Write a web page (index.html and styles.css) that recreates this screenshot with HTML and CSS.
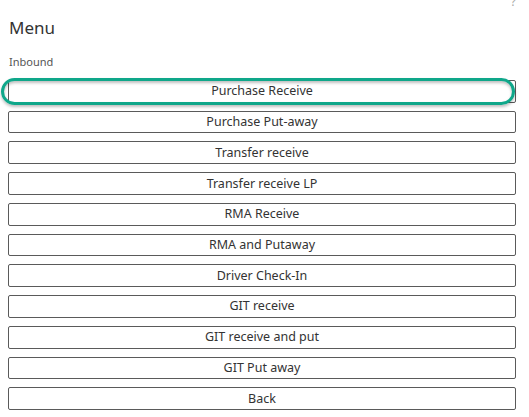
FILE: index.html
```html
<!DOCTYPE html>
<html>
<head>
<meta charset="utf-8">
<link rel="stylesheet" href="styles.css">
</head>
<body>
<div class="page">
  <span class="help">?</span>
  <h1 class="title">Menu</h1>
  <div class="section">Inbound</div>
  <div class="buttons">
    <button class="btn focused">Purchase Receive</button>
    <button class="btn">Purchase Put-away</button>
    <button class="btn">Transfer receive</button>
    <button class="btn">Transfer receive LP</button>
    <button class="btn">RMA Receive</button>
    <button class="btn">RMA and Putaway</button>
    <button class="btn">Driver Check-In</button>
    <button class="btn">GIT receive</button>
    <button class="btn">GIT receive and put</button>
    <button class="btn">GIT Put away</button>
    <button class="btn">Back</button>
  </div>
</div>
</body>
</html>
```
FILE: styles.css
```css
html, body {
  margin: 0;
  padding: 0;
  background: #fff;
}
.page {
  position: relative;
  font-family: "Noto Sans", "Open Sans", sans-serif;
  color: #333;
  padding: 0 13px 0 8px;
}
.help {
  position: absolute;
  top: -7px;
  right: 13px;
  font-size: 12px;
  color: #aaa;
}
.title {
  margin: 0;
  padding-top: 17px;
  padding-left: 1px;
  font-size: 17px;
  font-weight: normal;
  line-height: 22px;
  color: #333;
}
.section {
  margin-top: 16px;
  padding-left: 1px;
  font-size: 11px;
  line-height: 14px;
  color: #555;
}
.buttons {
  margin-top: 11px;
  display: flex;
  flex-direction: column;
  gap: 8.05px;
}
.btn {
  position: relative;
  height: 22.7px;
  margin: 0;
  padding: 0;
  background: #fff;
  border: 1px solid #5a5a5a;
  border-radius: 2px;
  font-family: "Noto Sans", "Open Sans", sans-serif;
  font-size: 12.5px;
  color: #333;
  line-height: 20px;
}
.btn.focused::after {
  content: "";
  position: absolute;
  left: -8px;
  right: 0;
  top: -3px;
  bottom: -3px;
  border: 3px solid #0fa78a;
  border-radius: 14px;
  box-shadow: inset 0 2px 3px rgba(0,0,0,0.25), 0 2px 3px rgba(0,0,0,0.25);
}
```
